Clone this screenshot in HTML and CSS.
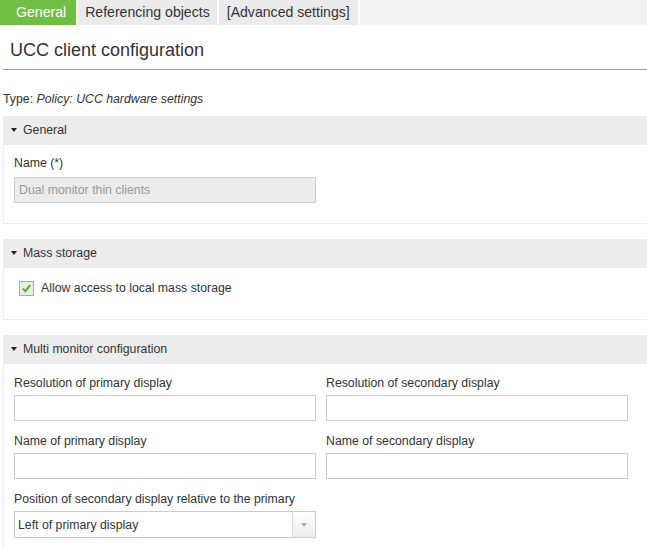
FILE: index.html
```html
<!DOCTYPE html>
<html>
<head>
<meta charset="utf-8">
<link rel="stylesheet" href="styles.css">
</head>
<body>
<div class="tabs">
  <div class="tab active">General</div>
  <div class="tab">Referencing objects</div>
  <div class="tab">[Advanced settings]</div>
  <div class="tab-fill"></div>
</div>
<div class="page">
  <h1 class="title">UCC client configuration</h1>
  <div class="type">Type: <i>Policy: UCC hardware settings</i></div>

  <div class="section">
    <div class="sec-head"><span class="caret"></span>General</div>
    <div class="sec-body general-body">
      <div class="field">
        <div class="label name-label">Name (*)</div>
        <div class="input disabled">Dual monitor thin clients</div>
      </div>
    </div>
  </div>

  <div class="section">
    <div class="sec-head"><span class="caret"></span>Mass storage</div>
    <div class="sec-body check-body">
      <label class="check">
        <span class="box"><svg width="11" height="11" viewBox="0 0 11 11"><path d="M1.8 5.6 L4.4 8.3 L9.2 2.2" fill="none" stroke="#5aa82e" stroke-width="2"/></svg></span>
        Allow access to local mass storage
      </label>
    </div>
  </div>

  <div class="section last">
    <div class="sec-head"><span class="caret"></span>Multi monitor configuration</div>
    <div class="sec-body grid-body">
      <div class="row">
        <div class="field">
          <div class="label">Resolution of primary display</div>
          <div class="input"></div>
        </div>
        <div class="field">
          <div class="label">Resolution of secondary display</div>
          <div class="input"></div>
        </div>
      </div>
      <div class="row">
        <div class="field">
          <div class="label">Name of primary display</div>
          <div class="input"></div>
        </div>
        <div class="field">
          <div class="label">Name of secondary display</div>
          <div class="input"></div>
        </div>
      </div>
      <div class="row">
        <div class="field">
          <div class="label">Position of secondary display relative to the primary</div>
          <div class="select"><span class="sel-text">Left of primary display</span><span class="sel-btn"><span class="sel-arrow"></span></span></div>
        </div>
      </div>
    </div>
  </div>
</div>
</body>
</html>
```
FILE: styles.css
```css
html, body {
  margin: 0;
  padding: 0;
  background: #fff;
}
body {
  font-family: "Liberation Sans", Arial, sans-serif;
  font-size: 12.3px;
  color: #333;
  height: 549px;
  overflow: hidden;
}
.tabs {
  display: flex;
  height: 25px;
  gap: 2px;
}
.tab {
  background: #ebebeb;
  font-size: 14.1px;
  line-height: 25px;
  padding: 0 7px 0 7px;
  color: #333;
}
.tab + .tab + .tab {
  padding: 0 8px 0 8px;
}
.tab.active {
  background: #70bf45;
  color: #fff;
  padding: 0 10px 0 16px;
}
.tab-fill {
  flex: 1;
  background: #f2f2f2;
}
.page {
  padding: 0 0 0 3px;
}
.title {
  margin: 0;
  font-size: 18px;
  font-weight: normal;
  color: #333;
  padding: 15px 0 9px 7px;
  line-height: 20px;
  border-bottom: 1px solid #999;
}
.type {
  padding: 21px 0 0 0;
  line-height: 16px;
  height: 16px;
  margin-bottom: 9px;
}
.section {
  margin-bottom: 15px;
}
.sec-head {
  background: #ececec;
  height: 29px;
  line-height: 29px;
  padding-left: 8px;
}
.caret {
  display: inline-block;
  width: 0;
  height: 0;
  border-left: 3.5px solid transparent;
  border-right: 3.5px solid transparent;
  border-top: 4px solid #222;
  vertical-align: middle;
  margin-right: 6px;
  position: relative;
  top: -1px;
}
.sec-body {
  border-left: 1px solid #ececec;
  border-bottom: 1px solid #ececec;
  padding: 12px 10px 20px 10px;
}
.general-body {
  padding-top: 10px;
}
.field {
  width: 302px;
}
.label {
  line-height: 16px;
  height: 16px;
  margin-bottom: 4px;
}
.name-label {
  margin-bottom: 6px;
}
.input {
  box-sizing: border-box;
  height: 26px;
  border: 1px solid #ccc;
  background: #fff;
  line-height: 24px;
  padding-left: 4px;
}
.input.disabled {
  background: #ececec;
  color: #999;
}
.check-body {
  padding: 13px 10px 23px 15px;
}
.check {
  display: flex;
  align-items: center;
  gap: 7px;
  line-height: 15px;
}
.box {
  box-sizing: border-box;
  width: 15px;
  height: 15px;
  border: 1px solid #9ab88a;
  background: #e4f0dc;
  display: flex;
  align-items: center;
  justify-content: center;
}
.grid-body {
  padding-top: 11px;
}
.row {
  display: flex;
  gap: 10px;
  margin-bottom: 12px;
}
.select {
  box-sizing: border-box;
  height: 27px;
  margin-top: 1px;
  border: 1px solid #ccc;
  display: flex;
}
.sel-text {
  flex: 1;
  line-height: 27px;
  padding-left: 3px;
}
.sel-btn {
  width: 22px;
  border-left: 1px solid #ddd;
  background: linear-gradient(#fff, #ececec);
  display: flex;
  align-items: center;
  justify-content: center;
}
.sel-arrow {
  width: 0;
  height: 0;
  border-left: 3.5px solid transparent;
  border-right: 3.5px solid transparent;
  border-top: 4px solid #8cc66b;
}
```
